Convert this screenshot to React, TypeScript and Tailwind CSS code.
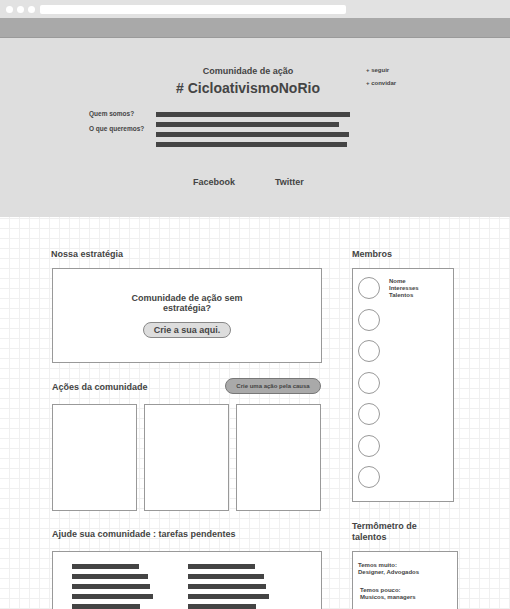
const bars = [67, 76, 78, 81, 68];

function TaskBars() {
  return (
    <div className="flex flex-col gap-[5px]">
      {bars.map((w, i) => (
        <div key={i} className="h-[5px] bg-[#444]" style={{ width: w }} />
      ))}
    </div>
  );
}

export default function App() {
  return (
    <div className="font-['Liberation_Sans',Arial,sans-serif] font-bold text-[#444] bg-white min-h-[609px]">
      {/* browser chrome */}
      <div className="h-[18px] bg-[#e2e2e2] flex items-center pl-[6px]">
        <div className="flex gap-[4px]">
          <span className="w-[7px] h-[7px] rounded-full bg-white" />
          <span className="w-[7px] h-[7px] rounded-full bg-white" />
          <span className="w-[7px] h-[7px] rounded-full bg-white" />
        </div>
        <div className="ml-[5px] w-[306px] h-[9px] bg-white rounded-[2px]" />
      </div>
      <div className="h-[20px] bg-[#a9a9a9] border-b border-[#9a9a9a]" />

      {/* community header */}
      <div className="h-[179px] bg-[#dedede] pt-[27px]">
        <div className="flex">
          <div className="ml-[130px] w-[236px] text-center">
            <div className="text-[9px] leading-[12px]">Comunidade de ação</div>
            <div className="text-[14px] leading-[18px] mt-[2px]">
              # CicloativismoNoRio
            </div>
          </div>
          <div className="text-[6px] leading-[13px] -mt-[1px]">
            <div>+ seguir</div>
            <div>+ convidar</div>
          </div>
        </div>
        <div className="flex mt-[13px] ml-[89px]">
          <div className="w-[67px] text-[6.5px] leading-[8px]">
            <div>Quem somos?</div>
            <div className="mt-[7px]">O que queremos?</div>
          </div>
          <div className="flex flex-col gap-[5px] pt-[2px]">
            <div className="h-[5px] w-[194px] bg-[#444]" />
            <div className="h-[5px] w-[183px] bg-[#444]" />
            <div className="h-[5px] w-[193px] bg-[#444]" />
            <div className="h-[5px] w-[191px] bg-[#444]" />
          </div>
        </div>
        <div className="flex gap-[40px] ml-[193px] mt-[29px] text-[9px] leading-[12px]">
          <span>Facebook</span>
          <span>Twitter</span>
        </div>
      </div>

      {/* content on grid */}
      <div className="flex h-[392px] overflow-hidden bg-[linear-gradient(to_right,#f0f0f0_1px,transparent_1px),linear-gradient(to_bottom,#f0f0f0_1px,transparent_1px)] [background-size:10px_10px] [background-position:9px_1px]">
        <div className="ml-[52px] w-[270px] pt-[31px]">
          <h2 className="text-[9px] leading-[12px] -ml-[1px]">Nossa estratégia</h2>
          <div className="mt-[8px] h-[95px] border border-[#999] bg-white flex flex-col items-center pt-[24px]">
            <div className="text-[9px] leading-[10px] text-center">
              Comunidade de ação sem
              <br />
              estratégia?
            </div>
            <div className="mt-[9px] w-[88px] h-[16px] rounded-full border border-[#888] bg-[#ddd] text-[9px] leading-[14px] text-center">
              Crie a sua aqui.
            </div>
          </div>

          <div className="flex justify-between items-center mt-[15px] pr-[1px]">
            <h2 className="text-[9px] leading-[12px] pt-[2px]">Ações da comunidade</h2>
            <div className="w-[96px] h-[16px] rounded-full border border-[#777] bg-[#a9a9a9] text-[6px] leading-[14px] text-center">
              Crie uma ação pela causa
            </div>
          </div>
          <div className="flex gap-[7px] mt-[10px]">
            <div className="w-[85px] h-[107px] border border-[#999] bg-white" />
            <div className="w-[85px] h-[107px] border border-[#999] bg-white" />
            <div className="w-[85px] h-[107px] border border-[#999] bg-white" />
          </div>

          <h2 className="mt-[17px] text-[9px] leading-[12px]">
            Ajude sua comunidade : tarefas pendentes
          </h2>
          <div className="mt-[11px] h-[120px] border border-[#999] bg-white flex pt-[12px] pl-[19px]">
            <div className="w-[116px]">
              <TaskBars />
            </div>
            <TaskBars />
          </div>
        </div>

        <div className="ml-[30px] w-[106px] pt-[31px]">
          <h2 className="text-[9px] leading-[12px]">Membros</h2>
          <div className="mt-[8px] w-[102px] h-[234px] border border-[#999] bg-white pt-[8px] pl-[5px] flex">
            <div className="flex flex-col gap-[9.5px]">
              {[0, 1, 2, 3, 4, 5, 6].map((i) => (
                <span key={i} className="block w-[22px] h-[22px] rounded-full border border-[#999]" />
              ))}
            </div>
            <div className="ml-[9px] mt-[1px] text-[6px] leading-[7px]">
              <div>Nome</div>
              <div>Interesses</div>
              <div>Talentos</div>
            </div>
          </div>

          <h2 className="mt-[19px] text-[9px] leading-[11px]">
            Termômetro de
            <br />
            talentos
          </h2>
          <div className="mt-[8px] w-[106px] h-[120px] border border-[#999] bg-white pt-[10px] pl-[5px] text-[6px] leading-[7px]">
            <div>Temos muito:</div>
            <div>Designer, Advogados</div>
            <div className="mt-[11px] ml-[2px]">Temos pouco:</div>
            <div className="ml-[2px]">Musicos, managers</div>
          </div>
        </div>
      </div>
    </div>
  );
}
